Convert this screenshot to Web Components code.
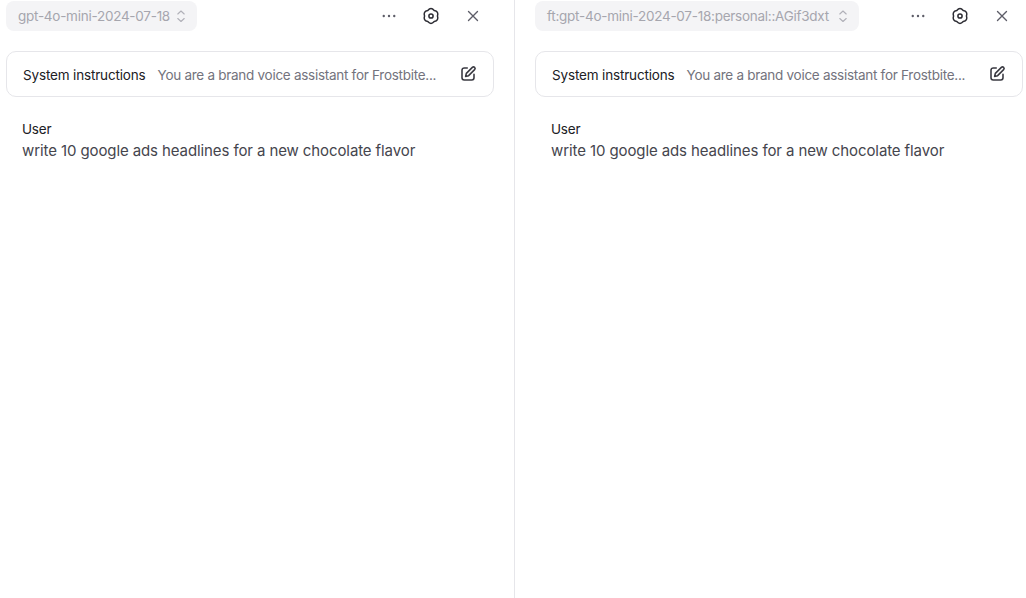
<!DOCTYPE html>
<html>
<head>
<meta charset="utf-8">
<title>Compare</title>
<style>
    html, body { margin: 0; height: 100%; background: #fff; }
    body { font-family: Inter, "Liberation Sans", sans-serif; overflow: hidden; }
</style>
</head>
<body>
<compare-view>
    <compare-pane model="gpt-4o-mini-2024-07-18" style="--pad-l: 6px; --pad-r: 20px; --pane-w: 515px; --select-gap: 3px;"></compare-pane>
    <compare-pane model="ft:gpt-4o-mini-2024-07-18:personal::AGif3dxt" style="--pad-l: 20px; --pad-r: 3px; --pane-w: 511px; --select-gap: 6px;"></compare-pane>
</compare-view>

<script>
const ICONS = {
    chevrons: '<path d="M4.8 6 8 3l3.2 3M4.8 10.5 8 13.5l3.2-3" fill="none" stroke="currentColor" stroke-width="1.1" stroke-linecap="round" stroke-linejoin="round"/>',
    dots: '<circle cx="5" cy="12" r="1.6" fill="currentColor"/><circle cx="12" cy="12" r="1.6" fill="currentColor"/><circle cx="19" cy="12" r="1.6" fill="currentColor"/>',
    gear: '<path d="M7.7 4.55Q12-.3 16.3 4.55 22.65 5.85 20.6 12 22.65 18.15 16.3 19.45 12 24.3 7.7 19.45 1.35 18.15 3.4 12 1.35 5.85 7.7 4.55Z" fill="none" stroke="currentColor" stroke-width="2" stroke-linejoin="round"/><circle cx="12" cy="12" r="2.8" fill="none" stroke="currentColor" stroke-width="2"/>',
    close: '<path d="M6 6l12 12M18 6 6 18" fill="none" stroke="currentColor" stroke-width="1.8" stroke-linecap="round"/>',
    edit: '<path d="M11 4H7a3 3 0 0 0-3 3v10a3 3 0 0 0 3 3h10a3 3 0 0 0 3-3v-4.5" fill="none" stroke="currentColor" stroke-width="2.1" stroke-linecap="round"/><path d="M17.8 3.2a2.1 2.1 0 0 1 3 3l-8 8-4 1 1-4 8-8Z" fill="none" stroke="currentColor" stroke-width="2.1" stroke-linejoin="round"/>'
};

class UiIcon extends HTMLElement {
    connectedCallback() {
        const size = this.getAttribute('size') || 18;
        const box = this.getAttribute('name') === 'chevrons' ? 16 : 24;
        this.attachShadow({ mode: 'open' });
        this.shadowRoot.innerHTML = `
            <style>
                :host { display: inline-flex; flex: none; color: inherit; }
                svg { display: block; }
            </style>
            <svg width="${size}" height="${size}" viewBox="0 0 ${box} ${box}">${ICONS[this.getAttribute('name')]}</svg>
        `;
    }
}

class ModelSelect extends HTMLElement {
    connectedCallback() {
        this.attachShadow({ mode: 'open' });
        this.shadowRoot.innerHTML = `
            <style>
                :host {
                    display: inline-flex;
                    align-items: center;
                    gap: var(--select-gap);
                    height: 30px;
                    padding: 0 8px 0 12px;
                    background: #f4f4f6;
                    border-radius: 8px;
                    color: #a6a6ae;
                    font-size: 13.5px;
                    letter-spacing: -0.26px;
                    white-space: nowrap;
                }
                ui-icon { color: #b0b0b8; }
            </style>
            <slot></slot>
            <ui-icon name="chevrons" size="16"></ui-icon>
        `;
    }
}

class ToolBar extends HTMLElement {
    connectedCallback() {
        this.attachShadow({ mode: 'open' });
        this.shadowRoot.innerHTML = `
            <style>
                :host {
                    display: flex;
                    align-items: center;
                    justify-content: space-between;
                    height: 30px;
                    margin-top: 1px;
                }
                .actions {
                    display: flex;
                    align-items: center;
                    gap: 24px;
                    padding-right: 12px;
                }
                .muted { color: #5d5d68; }
                .dark { color: #2c2c33; }
            </style>
            <slot></slot>
            <div class="actions">
                <ui-icon class="muted" name="dots" size="18"></ui-icon>
                <ui-icon class="dark" name="gear" size="18"></ui-icon>
                <ui-icon class="muted" name="close" size="18"></ui-icon>
            </div>
        `;
    }
}

class SystemCard extends HTMLElement {
    connectedCallback() {
        this.attachShadow({ mode: 'open' });
        this.shadowRoot.innerHTML = `
            <style>
                :host {
                    display: flex;
                    align-items: center;
                    justify-content: space-between;
                    box-sizing: border-box;
                    height: 46px;
                    margin-top: 20px;
                    padding: 0 16px 1px 16px;
                    border: 1px solid #e6e6ea;
                    border-radius: 10px;
                    font-size: 13.5px;
                    letter-spacing: -0.28px;
                }
                .title { padding-top: 3px; color: #202024; white-space: nowrap; letter-spacing: -0.16px; }
                .text {
                    flex: 1;
                    margin-left: 12px;
                    padding-top: 3px;
                    color: #73737d;
                    white-space: nowrap;
                }
                ui-icon { color: #3a3a42; }
            </style>
            <span class="title">System instructions</span>
            <span class="text"><slot></slot></span>
            <ui-icon name="edit" size="18"></ui-icon>
        `;
    }
}

class ChatMessage extends HTMLElement {
    connectedCallback() {
        this.attachShadow({ mode: 'open' });
        this.shadowRoot.innerHTML = `
            <style>
                :host {
                    display: block;
                    margin-top: 22px;
                    padding-left: 16px;
                }
                .role { font-size: 13.5px; line-height: 20px; color: #202024; letter-spacing: -0.2px; }
                .body { font-size: 15px; line-height: 24px; color: #45454d; letter-spacing: -0.1px; }
            </style>
            <div class="role">${this.getAttribute('role-name')}</div>
            <div class="body"><slot></slot></div>
        `;
    }
}

class ComparePane extends HTMLElement {
    connectedCallback() {
        this.attachShadow({ mode: 'open' });
        this.shadowRoot.innerHTML = `
            <style>
                :host {
                    display: block;
                    box-sizing: border-box;
                    width: var(--pane-w);
                    flex: none;
                    padding: 0 var(--pad-r) 0 var(--pad-l);
                }
            </style>
            <tool-bar><model-select>${this.getAttribute('model')}</model-select></tool-bar>
            <system-card>You are a brand voice assistant for Frostbite...</system-card>
            <chat-message role-name="User">write 10 google ads headlines for a new chocolate flavor</chat-message>
        `;
    }
}

class CompareView extends HTMLElement {
    connectedCallback() {
        this.attachShadow({ mode: 'open' });
        this.shadowRoot.innerHTML = `
            <style>
                :host { display: flex; height: 598px; }
                ::slotted(compare-pane:first-child) { border-right: 1px solid #e6e6ea; }
            </style>
            <slot></slot>
        `;
    }
}

customElements.define('ui-icon', UiIcon);
customElements.define('model-select', ModelSelect);
customElements.define('tool-bar', ToolBar);
customElements.define('system-card', SystemCard);
customElements.define('chat-message', ChatMessage);
customElements.define('compare-pane', ComparePane);
customElements.define('compare-view', CompareView);
</script>
</body>
</html>
